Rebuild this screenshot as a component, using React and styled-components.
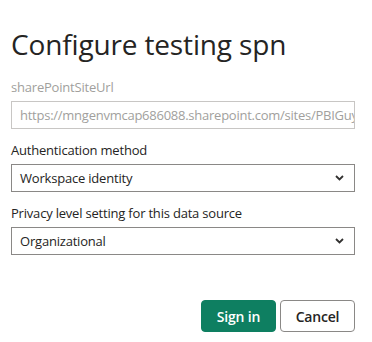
import React from "react";
import styled, { createGlobalStyle } from "styled-components";

const GlobalStyle = createGlobalStyle`
	html, body {
		margin: 0;
		padding: 0;
		background: #ffffff;
	}
	body {
		font-family: "Open Sans", "Noto Sans", Arial, sans-serif;
		color: #252423;
	}
`;

const Dialog = styled.div`
	width: 344px;
	padding: 24px 0 0 11px;
	display: flex;
	flex-direction: column;
`;

const Title = styled.h1`
	margin: 0 0 14px 0;
	font-size: 28px;
	font-weight: 400;
	line-height: 40px;
	letter-spacing: -0.15px;
	color: #252423;
`;

const Field = styled.div`
	display: flex;
	flex-direction: column;
	gap: 5px;
	margin-bottom: 12px;
`;

const Label = styled.label`
	font-size: 13px;
	line-height: 18px;
	letter-spacing: -0.2px;
	color: ${(p) => (p.disabled ? "#a19f9d" : "#252423")};
`;

const Input = styled.div`
	box-sizing: border-box;
	height: 28px;
	border: 1px solid #c8c6c4;
	padding: 0 8px;
	display: flex;
	align-items: center;
	font-size: 13px;
	letter-spacing: -0.25px;
	color: #a19f9d;
	white-space: nowrap;
	overflow: hidden;
`;

const Select = styled.div`
	box-sizing: border-box;
	height: 28px;
	border: 1px solid #8a8886;
	padding: 0 10px 0 8px;
	display: flex;
	align-items: center;
	justify-content: space-between;
	font-size: 13px;
	letter-spacing: -0.2px;
	color: #252423;
`;

const Footer = styled.div`
	display: flex;
	justify-content: flex-end;
	gap: 4px;
	margin-top: 33px;
`;

const Button = styled.button`
	box-sizing: border-box;
	width: 75px;
	height: 32px;
	border-radius: 4px;
	font-family: inherit;
	font-size: 14px;
	font-weight: 600;
	letter-spacing: -0.2px;
	cursor: pointer;
	border: 1px solid ${(p) => (p.primary ? "#0e7f61" : "#8a8886")};
	background: ${(p) => (p.primary ? "#0e7f61" : "#ffffff")};
	color: ${(p) => (p.primary ? "#ffffff" : "#252423")};
`;

const Chevron = () => (
	<svg width="9" height="6" viewBox="0 0 9 6">
		<path d="M1 1 L4.5 4.5 L8 1" fill="none" stroke="#323130" strokeWidth="1.8" />
	</svg>
);

const App = () => {
	return (
		<>
			<GlobalStyle />
			<Dialog>
				<Title>Configure testing spn</Title>
				<Field>
					<Label disabled>sharePointSiteUrl</Label>
					<Input>https://mngenvmcap686088.sharepoint.com/sites/PBIGuy</Input>
				</Field>
				<Field>
					<Label>Authentication method</Label>
					<Select>
						<span>Workspace identity</span>
						<Chevron />
					</Select>
				</Field>
				<Field>
					<Label>Privacy level setting for this data source</Label>
					<Select>
						<span>Organizational</span>
						<Chevron />
					</Select>
				</Field>
				<Footer>
					<Button primary>Sign in</Button>
					<Button>Cancel</Button>
				</Footer>
			</Dialog>
		</>
	);
};

export default App;
